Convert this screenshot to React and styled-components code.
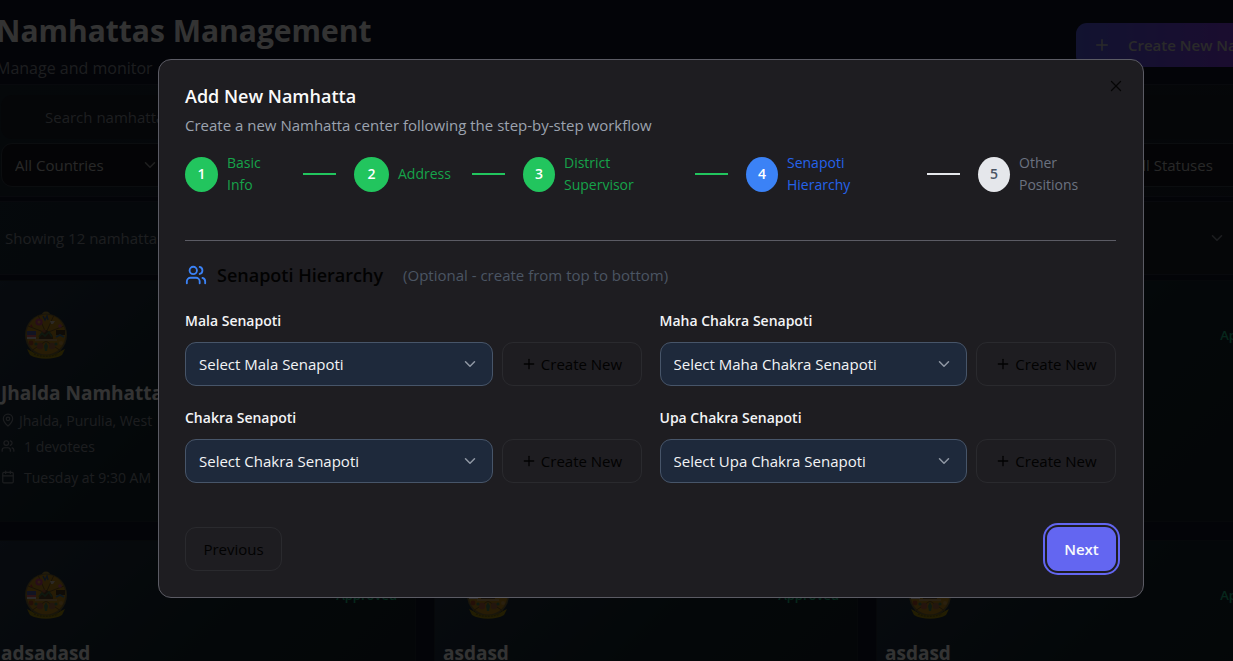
import React from "react";
import styled, { createGlobalStyle } from "styled-components";
import { Calendar, ChevronDown, MapPin, Plus, Users, X } from "lucide-react";

const Global = createGlobalStyle`
  * { box-sizing: border-box; }
  html, body { margin: 0; background: #03050a; overflow: hidden; }
  body, button, input, select {
    font-family: "Open Sans", "Noto Sans", sans-serif;
    font-size: 15px;
  }
  h1, h2, h3, p { margin: 0; }
`;

const Shell = styled.div`
  position: relative;
  width: calc(100% + 69px);
  height: 100vh;
  overflow: hidden;
  background: #0f1528;
`;

const Main = styled.main`
  display: flex;
  flex-direction: column;
  margin: 0 2px 0 -8px;
`;

const PageHeader = styled.header`
  display: flex;
  justify-content: space-between;
  align-items: flex-start;
  height: 84px;
  padding: 9px 8px 0 4px;
`;

const PageTitle = styled.h1`
  color: #fff;
  font-size: 30px;
  line-height: 44px;
  font-weight: 700;
`;

const PageText = styled.p`
  color: #8d929c;
  font-size: 16px;
  line-height: 30px;
`;

const CreateButton = styled.button`
  display: flex;
  align-items: center;
  gap: 17px;
  width: 216px;
  height: 44px;
  margin-top: 14px;
  padding: 0 0 0 17px;
  border: 0;
  border-radius: 11px;
  background: linear-gradient(90deg, #5a5ff0, #9333ea);
  color: #d0d0d0;
  font-weight: 600;
  white-space: nowrap;
`;

const Panel = styled.section`
  border: 1px solid #2a3040;
  border-radius: 8px;
  background: linear-gradient(90deg, #1c2836, #1c222c);
`;

const FilterPanel = styled(Panel)`
  height: 113px;
  padding: 10px 8px;
  margin-bottom: 4px;
`;

const SearchBox = styled.input`
  display: block;
  width: 100%;
  height: 44px;
  margin-bottom: 4px;
  padding: 0 44px;
  border: 0;
  border-radius: 11px;
  background: #191e28;
  color: #fff;
  &::placeholder { color: #8f949e; opacity: 1; }
`;

const FilterGrid = styled.div`
  display: grid;
  grid-template-columns: repeat(7, 1fr);
  gap: 14px;
`;

const SelectBox = styled.div`
  position: relative;
  flex: 1;
  min-width: 0;
  svg {
    position: absolute;
    right: 14px;
    top: 13px;
    color: ${(p) => (p.$dim ? "#9a9a9a" : "#9098a4")};
    pointer-events: none;
  }
  &:last-child { grid-column-end: ${(p) => (p.$dim ? -1 : "auto")}; }
`;

const Select = styled.select`
  appearance: none;
  display: block;
  width: 100%;
  height: 44px;
  padding: 0 32px 0 13px;
  border: 1px solid ${(p) => (p.$dim ? "#3a404c" : "#475569")};
  border-radius: 11px;
  background: ${(p) => (p.$dim ? "#14171f" : "#1e293b")};
  color: ${(p) => (p.$dim ? "#c6c6c6" : "#f3f4f6")};
`;

const ResultPanel = styled(Panel)`
  display: flex;
  align-items: center;
  justify-content: space-between;
  height: 74px;
  margin-bottom: 5px;
  padding: 0 73px 0 12px;
  color: #8f949e;
  background: linear-gradient(120deg, #1c2d3c, #1c222c 60%);
`;

const CardGrid = styled.div`
  display: grid;
  grid-template-columns: repeat(3, 1fr);
  gap: 18px;
`;

const Card = styled.article`
  height: 242px;
  padding: 10px 8px;
  border: 1px solid #222c36;
  border-radius: 8px;
  background: linear-gradient(135deg, #28374b, #14262e 50%, #191e28);
`;

const CardTop = styled.div`
  display: flex;
  align-items: center;
  justify-content: space-between;
  height: 88px;
  padding: 0 10px 0 23px;
`;

const Badge = styled.span`
  color: #22c08a;
  font-size: 13px;
  font-weight: 600;
`;

const CardTitle = styled.h2`
  color: #fff;
  font-size: 19px;
  line-height: 28px;
`;

const Meta = styled.p`
  display: flex;
  align-items: center;
  gap: ${(p) => (p.$tight ? 4 : 9)}px;
  height: 26px;
  margin-top: ${(p) => (p.$spaced ? 5 : 0)}px;
  color: #8d929c;
  font-size: 14px;
`;

const Overlay = styled.div`
  position: absolute;
  inset: 0;
  display: flex;
  justify-content: center;
  align-items: flex-start;
  padding-top: 59px;
  background: rgba(0, 0, 0, 0.8);
`;

const Dialog = styled.section`
  position: relative;
  width: 986px;
  padding: 25px 27px 26px 26px;
  border: 1px solid #5b5b64;
  border-radius: 13px;
  background: #1e1d21;
`;

const CloseButton = styled.button`
  position: absolute;
  top: 17px;
  right: 18px;
  display: flex;
  padding: 0;
  border: 0;
  background: none;
  color: #050505;
`;

const DialogTitle = styled.h2`
  color: #fafafa;
  font-size: 18px;
  line-height: 22px;
  font-weight: 600;
`;

const DialogText = styled.p`
  margin-top: 7px;
  color: #9ca3af;
  line-height: 22px;
`;

const Steps = styled.ol`
  display: flex;
  align-items: center;
  height: 44px;
  margin: 16px 0 44px;
  padding: 0;
  list-style: none;
  font-size: 14px;
`;

const tones = {
  done: { fill: "#22c55e", text: "#16a34a", number: "#fff", line: "#22c55e" },
  current: { fill: "#3b82f6", text: "#2563eb", number: "#fff", line: "#e5e7eb" },
  next: { fill: "#e5e7eb", text: "#6b7280", number: "#4b5563", line: "#e5e7eb" },
};

const Step = styled.li`
  display: flex;
  align-items: center;
  color: ${(p) => tones[p.$tone].text};
  font-weight: ${(p) => (p.$tone === "current" ? 500 : 400)};
  line-height: 22px;
`;

const StepNumber = styled.span`
  display: flex;
  align-items: center;
  justify-content: center;
  width: ${(p) => p.$width}px;
  height: 35px;
  margin-right: 9px;
  border-radius: 50%;
  background: ${(p) => tones[p.$tone].fill};
  color: ${(p) => tones[p.$tone].number};
  font-weight: 600;
`;

const StepLabel = styled.span`
  width: ${(p) => p.$width}px;
`;

const StepLine = styled.span`
  width: 33px;
  height: 2px;
  margin: 0 18px;
  background: ${(p) => tones[p.$tone].line};
`;

const SectionHead = styled.div`
  display: flex;
  align-items: center;
  height: 68px;
  border-top: 1px solid #5b5b64;
`;

const SectionTitle = styled.h3`
  margin: 0 20px 0 10px;
  color: #020202;
  font-size: 18px;
  font-weight: 600;
`;

const Hint = styled.span`
  color: #4b5563;
`;

const FieldGrid = styled.div`
  display: grid;
  grid-template-columns: 1fr 1fr;
  gap: 19px 18px;
`;

const Label = styled.label`
  display: block;
  height: 34px;
  line-height: 26px;
  color: #f3f4f6;
  font-size: 14px;
  font-weight: 600;
`;

const FieldRow = styled.div`
  display: flex;
  gap: 9px;
`;

const OutlineButton = styled.button`
  display: flex;
  align-items: center;
  justify-content: center;
  gap: 4px;
  width: ${(p) => p.$width}px;
  height: 44px;
  padding: 0;
  border: 1px solid #2a2a2e;
  border-radius: 11px;
  background: transparent;
  color: #020202;
  font-weight: 500;
`;

const Actions = styled.div`
  display: flex;
  justify-content: space-between;
  margin-top: 44px;
`;

const NextButton = styled.button`
  width: 69px;
  height: 44px;
  padding: 0;
  border: 0;
  border-radius: 11px;
  background: #6366f1;
  color: #f8fafc;
  font-weight: 600;
  box-shadow: 0 0 0 2px #1e1d21, 0 0 0 4px #6366f1;
`;

const steps = [
  { label: "Basic Info", tone: "done", circle: 33, width: 58 },
  { label: "Address", tone: "done", circle: 35, width: 56 },
  { label: "District Supervisor", tone: "done", circle: 32, width: 113 },
  { label: "Senapoti Hierarchy", tone: "current", circle: 32, width: 122 },
  { label: "Other Positions", tone: "next", circle: 32, width: 97 },
];

const fields = ["Mala Senapoti", "Maha Chakra Senapoti", "Chakra Senapoti", "Upa Chakra Senapoti"];

const cards = [
  { title: "Jhalda Namhatta", place: "Jhalda, Purulia, West", people: "1 devotees", time: "Tuesday at 9:30 AM", status: "Approved" },
  {},
  { status: "Approved" },
  { title: "adsadasd", status: "Approved" },
  { title: "asdasd", status: "Approved" },
  { title: "asdasd", status: "Approved" },
];

function Emblem() {
  return (
    <svg width="44" height="48" viewBox="0 0 44 48" aria-hidden="true">
      <circle cx="22" cy="5" r="4.5" fill="#a88a3a" />
      <ellipse cx="22" cy="24" rx="21" ry="21.5" fill="#7c6c38" />
      <ellipse cx="22" cy="23.5" rx="19.5" ry="20" fill="#c08a1c" />
      <path d="M22 22 4 15M22 22 14 4M22 22 30 4M22 22 40 15M22 30 7 40M22 30 37 40" stroke="#7a5a20" />
      <circle cx="15" cy="11" r="3.6" fill="#c8417c" />
      <circle cx="15" cy="11" r="1.5" fill="#e0904a" />
      <path d="m19 5 2 4 2-4 1 4" fill="none" stroke="#3c5f90" strokeWidth="1.4" />
      <path d="M26 10h5l-2 3h-2z" fill="#d9cbb8" />
      <circle cx="36" cy="15" r="1.8" fill="#d05a9d" />
      <path d="m6 16 1-3 2 3z" fill="#c4383e" />
      <path d="M3 20h9v4H3z" fill="#5460a8" />
      <path d="M3 24h9v2H3z" fill="#d65b68" />
      <path d="M3 26h9v2H3z" fill="#ddd0d0" />
      <path d="M15 28c0-5 3-7 7-9 4 2 7 4 7 9z" fill="#604528" />
      <path d="m15 26 3-4 3 3 4-4 3 5" fill="none" stroke="#4b7a4c" strokeWidth="1.6" />
      <circle cx="20" cy="20" r="1.8" fill="#b8653f" />
      <path d="M32 19h9v5h-9z" fill="#4c3a20" />
      <path d="m32 26 4-2 4 2" stroke="#3f7ba0" strokeWidth="1.8" fill="none" />
      <circle cx="7" cy="32" r="2.4" fill="#b34a2c" />
      <circle cx="37" cy="32" r="2" fill="#d0a04a" />
      <path d="M11 29h22" stroke="#cdb9a2" />
      <circle cx="16" cy="35" r="3.2" fill="#bb6440" />
      <circle cx="28" cy="35" r="3.2" fill="#b07048" />
      <circle cx="12" cy="33" r="1.6" fill="#4a8058" />
      <circle cx="32" cy="33" r="1.6" fill="#4a8058" />
      <path d="m20 35 2-4 2 4-1 5h-2z" fill="#4a8058" />
      <path d="m3 38 4 2c8 6 22 6 30 0l4-2-3 6c-8 5-24 5-32 0z" fill="#a8900e" />
      <path d="M10 43c7 3 17 3 24 0" fill="none" stroke="#7a6a10" strokeWidth="1.4" strokeDasharray="2 1" />
    </svg>
  );
}

function Dropdown({ id, text, dim }) {
  return (
    <SelectBox $dim={dim}>
      <Select id={id} $dim={dim} aria-label={dim ? text : undefined}>
        <option>{text}</option>
      </Select>
      <ChevronDown size={18} />
    </SelectBox>
  );
}

export default function App() {
  return (
    <Shell>
      <Global />
      <Main>
        <PageHeader>
          <div>
            <PageTitle>Namhattas Management</PageTitle>
            <PageText>Manage and monitor</PageText>
          </div>
          <CreateButton>
            <Plus size={18} />
            Create New Namhatta
          </CreateButton>
        </PageHeader>
        <FilterPanel>
          <SearchBox placeholder="Search namhattas..." aria-label="Search namhattas" />
          <FilterGrid>
            <Dropdown text="All Countries" dim />
            <Dropdown text="All Statuses" dim />
          </FilterGrid>
        </FilterPanel>
        <ResultPanel>
          <span>Showing 12 namhattas</span>
          <ChevronDown size={18} />
        </ResultPanel>
        <CardGrid>
          {cards.map((card, i) => (
            <Card key={i}>
              <CardTop>
                <Emblem />
                {card.status && <Badge>{card.status}</Badge>}
              </CardTop>
              {card.title && <CardTitle>{card.title}</CardTitle>}
              {card.place && (
                <>
                  <Meta $tight><MapPin size={14} />{card.place}</Meta>
                  <Meta><Users size={14} />{card.people}</Meta>
                  <Meta $spaced><Calendar size={14} />{card.time}</Meta>
                </>
              )}
            </Card>
          ))}
        </CardGrid>
      </Main>
      <Overlay>
        <Dialog role="dialog" aria-labelledby="dialog-title">
          <CloseButton aria-label="Close"><X size={18} strokeWidth={1.7} /></CloseButton>
          <DialogTitle id="dialog-title">Add New Namhatta</DialogTitle>
          <DialogText>Create a new Namhatta center following the step-by-step workflow</DialogText>
          <Steps>
            {steps.map((s, i) => (
              <Step key={s.label} $tone={s.tone}>
                <StepNumber $tone={s.tone} $width={s.circle}>{i + 1}</StepNumber>
                <StepLabel $width={s.width}>{s.label}</StepLabel>
                {i < steps.length - 1 && <StepLine $tone={s.tone} />}
              </Step>
            ))}
          </Steps>
          <SectionHead>
            <Users size={22} color="#3b82f6" />
            <SectionTitle>Senapoti Hierarchy</SectionTitle>
            <Hint>(Optional - create from top to bottom)</Hint>
          </SectionHead>
          <FieldGrid>
            {fields.map((name) => {
              const id = name.toLowerCase().replaceAll(" ", "-");
              return (
                <div key={name}>
                  <Label htmlFor={id}>{name}</Label>
                  <FieldRow>
                    <Dropdown id={id} text={`Select ${name}`} />
                    <OutlineButton $width={140}><Plus size={16} />Create New</OutlineButton>
                  </FieldRow>
                </div>
              );
            })}
          </FieldGrid>
          <Actions>
            <OutlineButton $width={97}>Previous</OutlineButton>
            <NextButton>Next</NextButton>
          </Actions>
        </Dialog>
      </Overlay>
    </Shell>
  );
}
